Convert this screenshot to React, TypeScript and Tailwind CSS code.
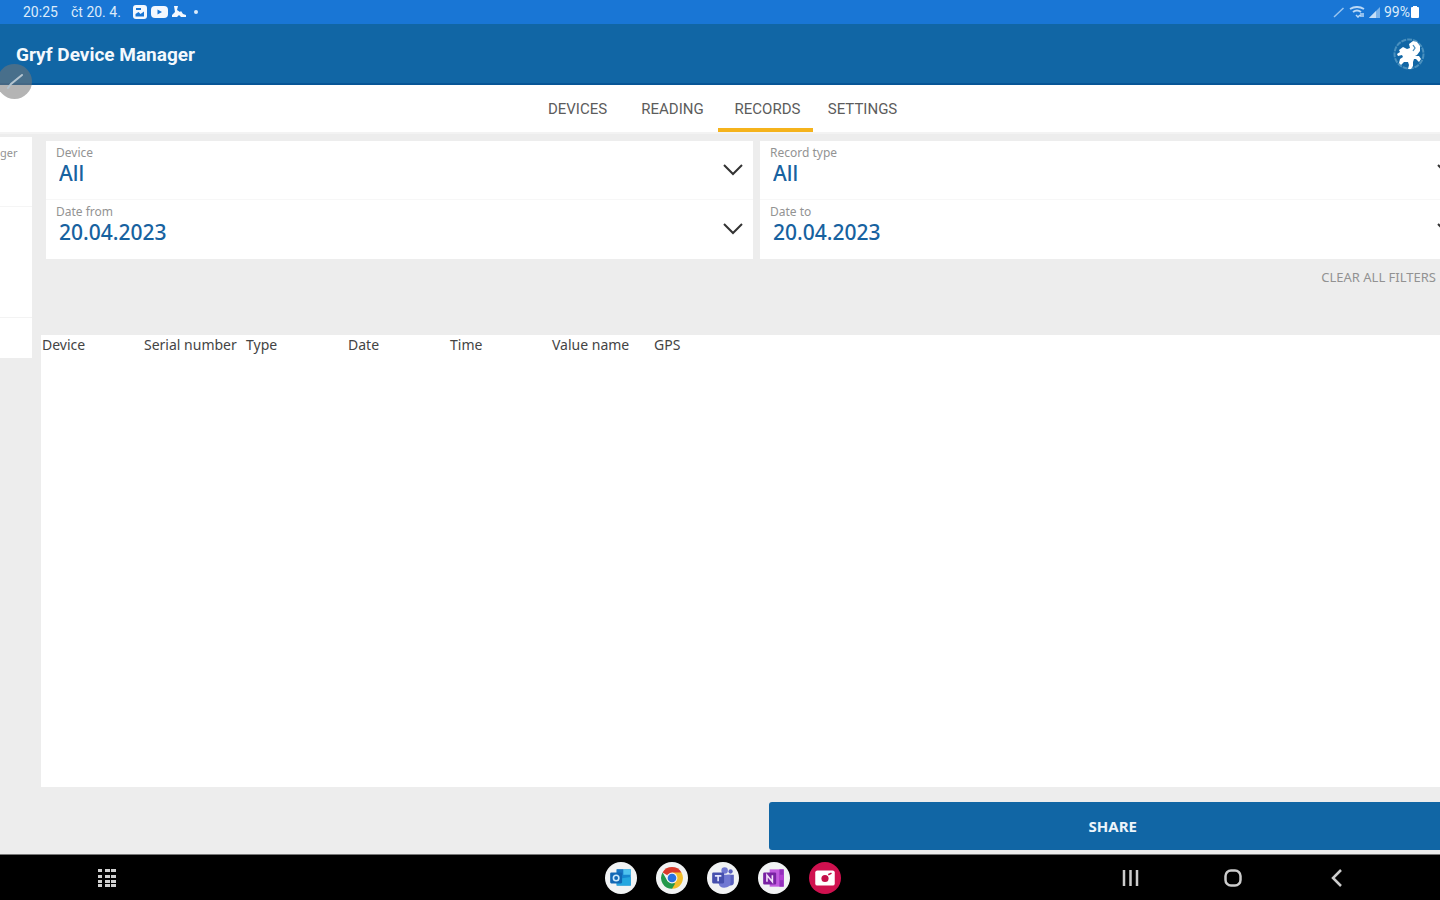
import React from "react";

const tabs = ["DEVICES", "READING", "RECORDS", "SETTINGS"];
const columns = ["Device", "Serial number", "Type", "Date", "Time", "Value name", "GPS"];

function StatusBar() {
  return (
    <div className="flex h-6 shrink-0 items-center justify-between bg-[#1976d5] pl-[23px] pr-[21px] text-sm leading-6 text-[#dcebfa]">
      <div className="flex items-center">
        <span className="w-12">20:25</span>
        <span className="w-[62px]">čt 20. 4.</span>
        <div className="flex items-center gap-1">
          <svg className="h-[14px] w-[14px]" viewBox="0 0 14 14">
            <rect width="14" height="14" rx="3" fill="#f3f8fe" />
            <path d="M2.500 11.500V9l3-2 2 2 3.500-2.500v5zM3 3h5v2H3z" fill="#1976d5" />
          </svg>
          <svg className="h-3 w-[17px]" viewBox="0 0 17 12">
            <rect width="17" height="12" rx="4" fill="#f3f8fe" />
            <path d="M6.500 3.500 11 6l-4.500 2.500z" fill="#1976d5" />
          </svg>
          <svg className="h-3 w-[14px]" viewBox="0 0 14 12" fill="#f3f8fe">
            <path d="M2 0h4L5 4l3 2 1-1 2 3 3 1v2H9L7 9l-2 2H0V9l3-3z" />
          </svg>
          <span className="ml-1 h-1 w-1 rounded-full bg-[#dcebfa]" />
        </div>
      </div>
      <div className="flex items-center gap-1">
        <svg className="h-3 w-3" viewBox="0 0 12 12" fill="none" stroke="#9ac5ef" strokeWidth="1.500">
          <path d="M1 11 10.500 2" />
        </svg>
        <svg className="h-3 w-4" viewBox="0 0 16 12" fill="none" stroke="#b9d8f6" strokeWidth="2">
          <path d="M1 3q7-4 14 0M4 6q4-3 8 0" />
          <path d="m7 9 2 2 2-2m1-2v4m2-4v4" strokeWidth="1.500" />
        </svg>
        <svg className="h-[11px] w-[11px]" viewBox="0 0 11 11">
          <path d="M11 0v11H0z" fill="#7db4ea" />
          <path d="M7 4v7H0z" fill="#c6dff7" />
        </svg>
        <div className="flex items-center gap-px">
          <span>99%</span>
          <svg className="h-3 w-2" viewBox="0 0 8 12" fill="#fff">
            <path d="M2 0h4v1h1q1 0 1 1v9q0 1-1 1H1q-1 0-1-1V2q0-1 1-1h1z" />
          </svg>
        </div>
      </div>
    </div>
  );
}

function GryfLogo() {
  return (
    <svg className="h-8 w-8" viewBox="0 0 32 32" fill="none">
      <circle cx="16" cy="16" r="14.500" stroke="#4a90be" strokeWidth="2" strokeDasharray="5 1" />
      <path
        d="M6 12l4-3 4 2 3-1-1-4 4-3 4 1 3 4v5l-3 4-2 1 4 0 2 3-2 3-3-3-2 0-1 3 0 4-2 3h-3l1-4-1-3-4 0-3 3-2-2 1-4 3-2-1-2-4 1-1-2 3-2z"
        fill="#fff"
      />
      <path d="m20 7 2 3-2 3" stroke="#4a90be" strokeWidth="1.300" />
    </svg>
  );
}

function Field({ id, label, value }: { id: string; label: string; value: string }) {
  return (
    <div className="relative h-[59px] border-b border-[#f7f7f7] last:border-b-0">
      <label htmlFor={id} className="block pl-[10px] pt-1 text-xs leading-4 text-[#939393]">
        {label}
      </label>
      <select
        id={id}
        defaultValue={value}
        className="block h-6 w-full appearance-none bg-transparent pl-[13px] pr-9 text-[21px] font-medium leading-6 text-[#1762a0] outline-none"
      >
        <option>{value}</option>
      </select>
      <svg
        className="pointer-events-none absolute right-[9px] top-[22px] h-[14px] w-[22px]"
        viewBox="0 0 22 14"
        fill="none"
        stroke="#333"
        strokeWidth="2"
      >
        <path d="m2 2 9 9 9-9" />
      </svg>
    </div>
  );
}

function AppIcon({ name, red, children }: { name: string; red?: boolean; children: React.ReactNode }) {
  return (
    <button
      aria-label={name}
      className={
        red
          ? "flex h-8 w-8 items-center justify-center rounded-full bg-[#cf114f]"
          : "flex h-8 w-8 items-center justify-center rounded-full bg-[#f1f3f4]"
      }
    >
      <svg className="h-[26px] w-[26px]" viewBox="0 0 24 24">
        {children}
      </svg>
    </button>
  );
}

function NavigationBar() {
  return (
    <nav className="grid h-[46px] shrink-0 grid-cols-[1fr_auto_1fr] items-center border-t border-[#777] bg-black pl-[97px] pr-[91px]">
      <button aria-label="All apps" className="h-5 w-5">
        <svg className="h-5 w-5" viewBox="0 0 20 20" fill="#d0d0d0">
          {[1, 7, 12, 16].map((y) =>
            [1, 8, 14].map((x) => <rect key={`${x}-${y}`} x={x} y={y} width={x === 1 ? 4 : 5} height="3" />),
          )}
        </svg>
      </button>
      <div className="flex gap-[19px]">
        <AppIcon name="Outlook">
          <path d="M8 4h13v15H8z" fill="#1687cf" />
          <path d="M14 4h7v5h-7z" fill="#4fc3ef" />
          <path d="M8 4h6v5H8z" fill="#1976c5" />
          <path d="m8 13 13-2v8H8z" fill="#24a7e0" />
          <rect x="2" y="7" width="11" height="10" rx="1" fill="#1268b5" />
          <circle cx="7.500" cy="12" r="2.500" fill="none" stroke="#cde9fb" strokeWidth="1.500" />
        </AppIcon>
        <AppIcon name="Chrome">
          <path d="M12 12 3.300 7A10 10 0 0 1 20.700 7z" fill="#d93a2b" />
          <path d="M12 12V7h8.700A10 10 0 0 1 12 22z" fill="#f2bd2c" />
          <path d="M12 12v10A10 10 0 0 1 3.300 7L8 15l7 2-3 5z" fill="#23984c" />
          <circle cx="12" cy="12" r="5" fill="#f4f5f5" />
          <circle cx="12" cy="12" r="4" fill="#2872df" />
        </AppIcon>
        <AppIcon name="Teams">
          <circle cx="13.500" cy="5" r="3" fill="#7078d2" />
          <circle cx="19" cy="6" r="2" fill="#5960bd" />
          <path d="M16 9h6v7q0 3-3 3h-3z" fill="#5960bd" />
          <path d="M9 9h10v7q0 5-6 5-4 0-5-4z" fill="#7078d2" />
          <rect x="2" y="7" width="11" height="10" rx="1" fill="#4650ae" />
          <path d="M4.500 10h6M7.500 10v5" stroke="#e5e7ff" strokeWidth="1.500" />
        </AppIcon>
        <AppIcon name="OneNote">
          <path d="M8 4h13v16H8z" fill="#c15bdf" />
          <path d="M17 4h4v16h-4z" fill="#9330bc" />
          <path d="M17 9h4v5h-4z" fill="#b240d2" />
          <rect x="2" y="7" width="12" height="11" rx="1" fill="#7923a3" />
          <path d="M5.500 15.500v-6l5 6v-6" fill="none" stroke="#f2dffa" strokeWidth="1.500" />
        </AppIcon>
        <AppIcon name="Screen recorder" red>
          <rect x="3" y="5" width="18" height="14" rx="2" fill="#fff" />
          <circle cx="12" cy="12.500" r="3.300" fill="#c40e48" />
          <path d="m15 9 3-1.500" stroke="#c40e48" strokeWidth="1.500" />
        </AppIcon>
      </div>
      <div className="flex justify-end gap-[79px]">
        <button aria-label="Recent apps" className="h-6 w-6">
          <svg viewBox="0 0 24 24" stroke="#ccc" strokeWidth="2.500">
            <path d="M5 4v16M11.500 4v16M18 4v16" />
          </svg>
        </button>
        <button aria-label="Home" className="h-6 w-6">
          <svg viewBox="0 0 24 24" fill="none" stroke="#ccc" strokeWidth="2.500">
            <rect x="3.500" y="4.500" width="15" height="15" rx="5.500" />
          </svg>
        </button>
        <button aria-label="Back" className="h-6 w-6">
          <svg viewBox="0 0 24 24" fill="none" stroke="#ccc" strokeWidth="2.500">
            <path d="m16 4-8 8 8 8" />
          </svg>
        </button>
      </div>
    </nav>
  );
}

export default function App() {
  return (
    <div className="relative flex h-screen flex-col overflow-hidden bg-[#ededed] font-['Noto_Sans',sans-serif]">
      <div className="shrink-0 font-[Roboto,sans-serif]">
        <StatusBar />
        <header className="flex h-[61px] items-center justify-between border-b-2 border-[#075596] bg-[#1166a5] pl-4 pr-[15px]">
          <h1 className="pt-1 text-[19px] font-bold text-[#f4f9fd]">Gryf Device Manager</h1>
          <GryfLogo />
        </header>
        <div className="flex h-[47px] justify-center bg-white pr-1" role="tablist">
          {tabs.map((tab) => (
            <button
              key={tab}
              role="tab"
              aria-selected={tab === "RECORDS"}
              className={
                tab === "RECORDS"
                  ? "w-[95px] border-b-4 border-[#f5b31c] pl-1 pt-1.5 text-[15px] text-[#5c5c5c]"
                  : "w-[95px] border-b-4 border-transparent pl-1 pt-1.5 text-[15px] text-[#5c5c5c]"
              }
            >
              {tab}
            </button>
          ))}
        </div>
      </div>

      <div className="absolute -left-[3px] top-16 flex h-[35px] w-[35px] items-center justify-center rounded-full bg-[#777]/55">
        <svg className="h-5 w-5" viewBox="0 0 20 20" fill="none" stroke="#b5c5d0" strokeWidth="2" strokeLinecap="round">
          <path d="m3 16 3-4L17 3" />
        </svg>
      </div>

      <div className="flex min-h-0 flex-1 border-t-2 border-[#f3f3f3] pb-1">
        <aside className="mr-[9px] mt-[3px] h-[221px] w-8 shrink-0 bg-white">
          <div className="h-[70px] border-b border-[#f5f5f5] pt-2 text-[11px] leading-4 text-[#939393]">ger</div>
          <div className="h-[111px] border-b border-[#f3f3f3]" />
        </aside>

        <main className="-mr-8 flex min-w-0 flex-1 flex-col pt-[7px]">
          <div className="grid grid-cols-2 gap-[7px] px-[5px]">
            <section className="bg-white">
              <Field id="device" label="Device" value="All" />
              <Field id="date-from" label="Date from" value="20.04.2023" />
            </section>
            <section className="bg-white">
              <Field id="record-type" label="Record type" value="All" />
              <Field id="date-to" label="Date to" value="20.04.2023" />
            </section>
          </div>
          <div className="flex h-[76px] items-start justify-end pr-9 pt-[10px]">
            <button className="text-[13px] leading-4 text-[#929292]">CLEAR ALL FILTERS</button>
          </div>
          <div className="min-h-0 flex-1 bg-white">
            <table className="w-full table-fixed text-left text-sm leading-5 text-[#444]">
              <thead>
                <tr>
                  {columns.map((column) => (
                    <th key={column} className="w-[102px] whitespace-nowrap p-0 pl-px font-normal last:w-auto">
                      {column}
                    </th>
                  ))}
                </tr>
              </thead>
            </table>
          </div>
          <div className="grid grid-cols-2 pt-[15px]">
            <button className="col-start-2 ml-3 mr-[15px] h-12 rounded-[3px] bg-[#1166a5] text-[15px] font-bold text-[#edf5fb]">
              SHARE
            </button>
          </div>
        </main>
      </div>
      <NavigationBar />
    </div>
  );
}
